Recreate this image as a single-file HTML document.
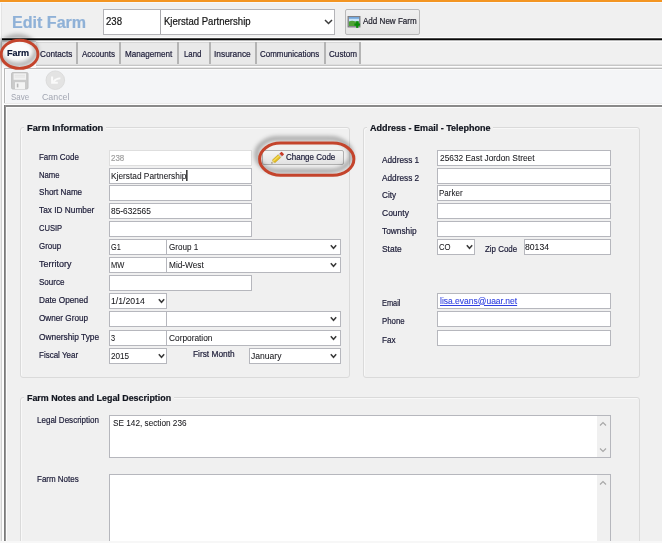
<!DOCTYPE html>
<html><head><meta charset="utf-8"><style>
html,body{margin:0;padding:0;}
body{width:662px;height:543px;overflow:hidden;position:relative;background:#f0f0f0;font-family:"Liberation Sans", sans-serif;}
.t{position:absolute;white-space:pre;transform-origin:0 0;-webkit-text-stroke:0.2px currentColor;}
.a{position:absolute;box-sizing:border-box;}
</style></head><body>
<!-- window chrome -->
<div class="a" style="left:0;top:0;width:662px;height:2px;background:#f39522"></div>
<div class="a" style="left:0;top:2px;width:662px;height:1px;background:#f7f8fa"></div>
<div class="a" style="left:0;top:3px;width:1px;height:35px;background:#fafafa"></div>
<div class="a" style="left:1px;top:3px;width:1px;height:35px;background:#e4e4e4"></div>
<div class="a" style="left:0;top:38px;width:1px;height:505px;background:#ececec"></div>
<div class="a" style="left:1px;top:38px;width:1px;height:505px;background:#d2d2d2"></div>
<div class="a" style="left:2px;top:41px;width:2px;height:502px;background:#fdfdfd"></div>

<!-- top combo -->
<div class="a" style="left:103px;top:9px;width:232px;height:26px;background:#fff;border:1px solid #b4b4b8"></div>
<div class="a" style="left:160px;top:10px;width:1px;height:24px;background:#a8a8ac"></div>
<svg class="a" style="left:324px;top:19px" width="9" height="6" viewBox="0 0 9 6"><path d="M1 1 L4.5 4.5 L8 1" fill="none" stroke="#3c3c3c" stroke-width="1.5"/></svg>

<!-- Add New Farm button -->
<div class="a" style="left:345px;top:9px;width:75px;height:26px;border:1px solid #b9b9b9;border-radius:2px;background:linear-gradient(#f0f0f0,#e4e4e4)"></div>
<svg class="a" style="left:347px;top:16px" width="16" height="15" viewBox="0 0 16 15">
 <rect x="1.2" y="0.3" width="11.6" height="10.5" fill="#c8e4f8" stroke="#7c7c80" stroke-width="1.3"/>
 <rect x="2" y="1.1" width="10" height="1.6" fill="#6a9fd8"/>
 <path d="M1.9 5.4 Q5 4.2 8 5.3 T12.1 5 V10.1 H1.9 Z" fill="#4fa236"/>
 <rect x="7.4" y="7.45" width="5.7" height="2.2" fill="#0a8c0a"/>
 <rect x="9.15" y="5.2" width="2.2" height="6.7" fill="#0a8c0a"/>
</svg>

<!-- black rule -->
<div class="a" style="left:2px;top:37px;width:660px;height:1px;background:#fdfdfd"></div>
<div class="a" style="left:2px;top:38px;width:660px;height:1px;background:#4a4a4a"></div>
<div class="a" style="left:2px;top:39px;width:660px;height:1px;background:#080808"></div>
<div class="a" style="left:2px;top:40px;width:660px;height:1px;background:#b4b4b4"></div>
<div class="a" style="left:2px;top:41px;width:660px;height:1px;background:#fafafa"></div>

<!-- tab strip -->
<div class="a" style="left:36px;top:42px;width:324px;height:23px;background:#e9e9e9;border-top:1px solid #d6d6d6"></div>
<div class="a" style="left:76px;top:42px;width:2px;height:23px;background:#b4b4b4"></div>
<div class="a" style="left:119px;top:42px;width:2px;height:23px;background:#b4b4b4"></div>
<div class="a" style="left:177px;top:42px;width:2px;height:23px;background:#b4b4b4"></div>
<div class="a" style="left:209px;top:42px;width:2px;height:23px;background:#b4b4b4"></div>
<div class="a" style="left:255px;top:42px;width:2px;height:23px;background:#b4b4b4"></div>
<div class="a" style="left:324px;top:42px;width:2px;height:23px;background:#b4b4b4"></div>
<div class="a" style="left:359px;top:42px;width:2px;height:23px;background:#b4b4b4"></div>
<div class="a" style="left:1px;top:41px;width:35px;height:27px;background:#fbfbfb;border-left:1px solid #cccccc;border-top:1px solid #d8d8d8"></div>
<div class="a" style="left:36px;top:64px;width:626px;height:1px;background:#dedede"></div>
<div class="a" style="left:36px;top:65px;width:626px;height:1px;background:#c6c6c6"></div>
<div class="a" style="left:36px;top:66px;width:626px;height:1px;background:#fefefe"></div>
<div class="a" style="left:36px;top:67px;width:626px;height:1px;background:#e6e6e6"></div>

<!-- toolbar panel -->
<div class="a" style="left:4px;top:68px;width:658px;height:37px;background:#f4f5f7;border-top:1px solid #bcbcbc;border-left:1px solid #b8b8b8"></div>
<div class="a" style="left:5px;top:69px;width:657px;height:1px;background:#fbfbfb"></div>
<div class="a" style="left:5px;top:69px;width:1px;height:35px;background:#fbfbfb"></div>
<div class="a" style="left:4px;top:103px;width:658px;height:1px;background:#ebebeb"></div>
<div class="a" style="left:4px;top:104px;width:658px;height:1px;background:#ffffff"></div>
<!-- save icon -->
<svg class="a" style="left:11px;top:72px" width="18" height="18" viewBox="0 0 18 18">
 <rect x="0.6" y="0.6" width="16.4" height="16.4" rx="1.2" fill="#cbcbcb" stroke="#c0c0c0" stroke-width="1"/>
 <rect x="2.6" y="1.4" width="12.4" height="6.4" fill="#f2f2f2"/>
 <rect x="3.6" y="2.8" width="10.4" height="0.8" fill="#dedede"/>
 <rect x="3.6" y="4.6" width="10.4" height="0.8" fill="#dedede"/>
 <rect x="4" y="10.2" width="10" height="6.8" fill="#f4f4f4"/>
 <rect x="5.8" y="11.6" width="1.6" height="3.8" fill="#b8b8b8"/>
</svg>
<!-- cancel icon -->
<svg class="a" style="left:45px;top:70px" width="21" height="21" viewBox="0 0 21 21">
 <circle cx="10.3" cy="10.2" r="9.3" fill="#e3e3e3" stroke="#d8d8d8" stroke-width="0.8"/>
 <path d="M8.4 11.8 Q11.2 8.2 15.4 8.4" fill="none" stroke="#fafafa" stroke-width="1.9"/>
 <path d="M7.1 6.6 V12.8 H12.8" fill="none" stroke="#fafafa" stroke-width="2"/>
</svg>

<!-- content frame -->
<div class="a" style="left:4px;top:105px;width:658px;height:2px;background:#8a8a8a"></div>
<div class="a" style="left:4px;top:105px;width:1px;height:436px;background:#7a7a7a"></div>
<div class="a" style="left:5px;top:105px;width:1px;height:436px;background:#959595"></div>
<div class="a" style="left:6px;top:107px;width:656px;height:1px;background:#fdfdfd"></div>
<div class="a" style="left:6px;top:107px;width:1px;height:434px;background:#fcfcfc"></div>


<!-- group frames -->
<div class="a" style="left:20px;top:127px;width:330px;height:251px;border:1px solid #dadada;border-radius:3px;box-shadow:inset 1px 1px 0 #f8f8f8"></div>
<div class="a" style="left:24px;top:122px;width:82px;height:12px;background:#f0f0f0"></div>
<div class="a" style="left:363px;top:127px;width:277px;height:251px;border:1px solid #dadada;border-radius:3px;box-shadow:inset 1px 1px 0 #f8f8f8"></div>
<div class="a" style="left:367px;top:122px;width:126px;height:12px;background:#f0f0f0"></div>
<div class="a" style="left:20px;top:397px;width:620px;height:160px;border:1px solid #dadada;border-radius:3px;box-shadow:inset 1px 1px 0 #f8f8f8"></div>
<div class="a" style="left:24px;top:391px;width:150px;height:12px;background:#f0f0f0"></div>
<div class="a" style="left:109px;top:150px;width:143px;height:16px;background:#fff;border:1px solid #dedede"></div>
<div class="a" style="left:109px;top:168px;width:143px;height:16px;background:#fff;border:1px solid #b6b7bd"></div>
<div class="a" style="left:109px;top:185px;width:143px;height:16px;background:#fff;border:1px solid #b6b7bd"></div>
<div class="a" style="left:109px;top:203px;width:143px;height:16px;background:#fff;border:1px solid #b6b7bd"></div>
<div class="a" style="left:109px;top:221px;width:143px;height:16px;background:#fff;border:1px solid #b6b7bd"></div>
<div class="a" style="left:109px;top:275px;width:143px;height:16px;background:#fff;border:1px solid #b6b7bd"></div>
<div class="a" style="left:109px;top:239px;width:232px;height:16px;background:#fff;border:1px solid #b6b7bd"></div>
<div class="a" style="left:166px;top:239px;width:1px;height:16px;background:#b6b7bd"></div>
<svg class="a" style="left:329.0px;top:244px" width="9" height="6" viewBox="0 0 9 6"><path d="M1.8 1.2 L4.5 4.3 L7.2 1.2" fill="none" stroke="#3a3a3a" stroke-width="1.5"/></svg>
<div class="a" style="left:109px;top:257px;width:232px;height:16px;background:#fff;border:1px solid #b6b7bd"></div>
<div class="a" style="left:166px;top:257px;width:1px;height:16px;background:#b6b7bd"></div>
<svg class="a" style="left:329.0px;top:262px" width="9" height="6" viewBox="0 0 9 6"><path d="M1.8 1.2 L4.5 4.3 L7.2 1.2" fill="none" stroke="#3a3a3a" stroke-width="1.5"/></svg>
<div class="a" style="left:109px;top:311px;width:232px;height:16px;background:#fff;border:1px solid #b6b7bd"></div>
<div class="a" style="left:166px;top:311px;width:1px;height:16px;background:#b6b7bd"></div>
<svg class="a" style="left:329.0px;top:316px" width="9" height="6" viewBox="0 0 9 6"><path d="M1.8 1.2 L4.5 4.3 L7.2 1.2" fill="none" stroke="#3a3a3a" stroke-width="1.5"/></svg>
<div class="a" style="left:109px;top:330px;width:232px;height:16px;background:#fff;border:1px solid #b6b7bd"></div>
<div class="a" style="left:166px;top:330px;width:1px;height:16px;background:#b6b7bd"></div>
<svg class="a" style="left:329.0px;top:335px" width="9" height="6" viewBox="0 0 9 6"><path d="M1.8 1.2 L4.5 4.3 L7.2 1.2" fill="none" stroke="#3a3a3a" stroke-width="1.5"/></svg>
<div class="a" style="left:109px;top:293px;width:58px;height:16px;background:#fff;border:1px solid #b6b7bd"></div>
<svg class="a" style="left:156.5px;top:298px" width="9" height="6" viewBox="0 0 9 6"><path d="M1.8 1.2 L4.5 4.3 L7.2 1.2" fill="none" stroke="#3a3a3a" stroke-width="1.5"/></svg>
<div class="a" style="left:109px;top:348px;width:58px;height:16px;background:#fff;border:1px solid #b6b7bd"></div>
<svg class="a" style="left:156.5px;top:353px" width="9" height="6" viewBox="0 0 9 6"><path d="M1.8 1.2 L4.5 4.3 L7.2 1.2" fill="none" stroke="#3a3a3a" stroke-width="1.5"/></svg>
<div class="a" style="left:249px;top:348px;width:92px;height:16px;background:#fff;border:1px solid #b6b7bd"></div>
<svg class="a" style="left:329.0px;top:353px" width="9" height="6" viewBox="0 0 9 6"><path d="M1.8 1.2 L4.5 4.3 L7.2 1.2" fill="none" stroke="#3a3a3a" stroke-width="1.5"/></svg>
<div class="a" style="left:437px;top:150px;width:174px;height:16px;background:#fff;border:1px solid #b6b7bd"></div>
<div class="a" style="left:437px;top:168px;width:174px;height:16px;background:#fff;border:1px solid #b6b7bd"></div>
<div class="a" style="left:437px;top:185px;width:174px;height:16px;background:#fff;border:1px solid #b6b7bd"></div>
<div class="a" style="left:437px;top:203px;width:174px;height:16px;background:#fff;border:1px solid #b6b7bd"></div>
<div class="a" style="left:437px;top:221px;width:174px;height:16px;background:#fff;border:1px solid #b6b7bd"></div>
<div class="a" style="left:437px;top:293px;width:174px;height:16px;background:#fff;border:1px solid #b6b7bd"></div>
<div class="a" style="left:437px;top:311px;width:174px;height:16px;background:#fff;border:1px solid #b6b7bd"></div>
<div class="a" style="left:437px;top:330px;width:174px;height:16px;background:#fff;border:1px solid #b6b7bd"></div>
<div class="a" style="left:437px;top:239px;width:38px;height:16px;background:#fff;border:1px solid #b6b7bd"></div>
<svg class="a" style="left:464.5px;top:244px" width="9" height="6" viewBox="0 0 9 6"><path d="M1.8 1.2 L4.5 4.3 L7.2 1.2" fill="none" stroke="#3a3a3a" stroke-width="1.5"/></svg>
<div class="a" style="left:524px;top:239px;width:87px;height:16px;background:#fff;border:1px solid #b6b7bd"></div>
<div class="a" style="left:109px;top:415px;width:502px;height:43px;background:#fff;border:1px solid #b6b7bd"></div>
<div class="a" style="left:597px;top:416px;width:13px;height:41px;background:#f0f0f0"></div>
<svg class="a" style="left:599px;top:421px" width="8" height="6" viewBox="0 0 8 6"><path d="M1 4.5 L4 1.5 L7 4.5" fill="none" stroke="#a8a8a8" stroke-width="1.2"/></svg>
<svg class="a" style="left:599px;top:447px" width="8" height="6" viewBox="0 0 8 6"><path d="M1 1.5 L4 4.5 L7 1.5" fill="none" stroke="#a8a8a8" stroke-width="1.2"/></svg>
<div class="a" style="left:109px;top:474px;width:502px;height:80px;background:#fff;border:1px solid #b6b7bd"></div>
<div class="a" style="left:597px;top:475px;width:13px;height:80px;background:#f0f0f0"></div>
<svg class="a" style="left:599px;top:480px" width="8" height="6" viewBox="0 0 8 6"><path d="M1 4.5 L4 1.5 L7 4.5" fill="none" stroke="#a8a8a8" stroke-width="1.2"/></svg>
<div class="a" style="left:186px;top:170px;width:1px;height:11px;background:#404040"></div><div class="a" style="left:187px;top:170px;width:1px;height:11px;background:#8a8a8a"></div>
<div class="a" style="left:262px;top:150px;width:82px;height:15px;border:1px solid #b0b0b0;border-radius:2px;background:linear-gradient(#f4f4f4,#e2e2e2)"></div>
<svg class="a" style="left:266px;top:148px" width="22" height="20" viewBox="0 0 22 20">
 <polygon points="5.40,15.40 8.90,14.80 6.35,11.98" fill="#e8d8a0"/>
 <polygon points="5.40,15.40 6.80,15.16 5.78,14.03" fill="#505050"/>
 <polygon points="8.90,14.80 14.83,9.43 12.28,6.61 6.35,11.98" fill="#e2bc22" stroke="#b08a10" stroke-width="0.4"/>
 <polygon points="7.75,13.53 13.68,8.16 12.79,7.17 6.86,12.54" fill="#f4dc5a"/>
 <polygon points="14.83,9.43 16.02,8.35 13.47,5.54 12.28,6.61" fill="#c8ccd4"/>
 <polygon points="16.02,8.35 18.05,6.51 17.00,4.90 15.50,3.69 13.47,5.54" fill="#c83a28"/>
</svg>
<svg class="a" style="left:0;top:0" width="662" height="543" viewBox="0 0 662 543">
 <defs><filter id="sh" x="-30%" y="-50%" width="160%" height="200%"><feGaussianBlur stdDeviation="2"/></filter></defs>
 <ellipse cx="17.6" cy="50.6" rx="18.4" ry="14.1" fill="none" stroke="#000" stroke-opacity="0.35" stroke-width="4" filter="url(#sh)"/>
 <ellipse cx="19.6" cy="54.3" rx="18.4" ry="14.1" fill="none" stroke="#c4442c" stroke-width="2.9"/>
 <rect x="256.6" y="138.6" width="94.5" height="32.4" rx="21" ry="16.2" fill="none" stroke="#000" stroke-opacity="0.35" stroke-width="4" filter="url(#sh)"/>
 <rect x="259.6" y="143" width="94.3" height="32.2" rx="21" ry="16.1" fill="none" stroke="#c4442c" stroke-width="3"/>
</svg>
<div class="a" style="left:0;top:541px;width:662px;height:2px;background:#f7f7f7;z-index:5"></div>

<span class="t" style="left:12.30px;top:13.50px;font-size:15.8px;line-height:18.15px;font-weight:bold;color:#8fb1d7;transform:scaleX(1.018);">Edit Farm</span>
<span class="t" style="left:105.60px;top:15.30px;font-size:10.5px;line-height:12.06px;font-weight:normal;color:#141414;transform:scaleX(0.913);">238</span>
<span class="t" style="left:163.80px;top:14.90px;font-size:10.5px;line-height:12.06px;font-weight:normal;color:#141414;transform:scaleX(0.910);">Kjerstad Partnership</span>
<span class="t" style="left:363.00px;top:15.80px;font-size:9.5px;line-height:10.92px;font-weight:normal;color:#1c1c28;transform:scaleX(0.848);">Add New Farm</span>
<span class="t" style="left:7.20px;top:46.93px;font-size:9.8px;line-height:11.26px;font-weight:bold;color:#0c1634;transform:scaleX(0.926);">Farm</span>
<span class="t" style="left:39.50px;top:48.98px;font-size:9.3px;line-height:10.69px;font-weight:normal;color:#1a1a36;transform:scaleX(0.880);">Contacts</span>
<span class="t" style="left:81.90px;top:48.98px;font-size:9.3px;line-height:10.69px;font-weight:normal;color:#1a1a36;transform:scaleX(0.863);">Accounts</span>
<span class="t" style="left:124.60px;top:48.98px;font-size:9.3px;line-height:10.69px;font-weight:normal;color:#1a1a36;transform:scaleX(0.873);">Management</span>
<span class="t" style="left:183.90px;top:48.98px;font-size:9.3px;line-height:10.69px;font-weight:normal;color:#1a1a36;transform:scaleX(0.846);">Land</span>
<span class="t" style="left:214.10px;top:48.98px;font-size:9.3px;line-height:10.69px;font-weight:normal;color:#1a1a36;transform:scaleX(0.899);">Insurance</span>
<span class="t" style="left:260.40px;top:48.98px;font-size:9.3px;line-height:10.69px;font-weight:normal;color:#1a1a36;transform:scaleX(0.856);">Communications</span>
<span class="t" style="left:328.70px;top:48.98px;font-size:9.3px;line-height:10.69px;font-weight:normal;color:#1a1a36;transform:scaleX(0.874);">Custom</span>
<span class="t" style="left:10.80px;top:90.63px;font-size:9.8px;line-height:11.26px;font-weight:normal;color:#a2a6b2;transform:scaleX(0.810);-webkit-text-stroke:0;">Save</span>
<span class="t" style="left:41.60px;top:90.63px;font-size:9.8px;line-height:11.26px;font-weight:normal;color:#a2a6b2;transform:scaleX(0.898);-webkit-text-stroke:0;">Cancel</span>
<span class="t" style="left:26.70px;top:123.05px;font-size:9px;line-height:10.34px;font-weight:bold;color:#10141e;transform:scaleX(1.030);">Farm Information</span>
<span class="t" style="left:369.70px;top:122.76px;font-size:9px;line-height:10.34px;font-weight:bold;color:#10141e;transform:scaleX(1.002);">Address - Email - Telephone</span>
<span class="t" style="left:26.50px;top:393.06px;font-size:9px;line-height:10.34px;font-weight:bold;color:#10141e;transform:scaleX(0.987);">Farm Notes and Legal Description</span>
<span class="t" style="left:38.70px;top:151.78px;font-size:9.3px;line-height:10.69px;font-weight:normal;color:#1a1a36;transform:scaleX(0.856);">Farm Code</span>
<span class="t" style="left:38.70px;top:169.78px;font-size:9.3px;line-height:10.69px;font-weight:normal;color:#1a1a36;transform:scaleX(0.830);">Name</span>
<span class="t" style="left:38.70px;top:186.78px;font-size:9.3px;line-height:10.69px;font-weight:normal;color:#1a1a36;transform:scaleX(0.869);">Short Name</span>
<span class="t" style="left:38.70px;top:204.78px;font-size:9.3px;line-height:10.69px;font-weight:normal;color:#1a1a36;transform:scaleX(0.892);">Tax ID Number</span>
<span class="t" style="left:38.70px;top:222.78px;font-size:9.3px;line-height:10.69px;font-weight:normal;color:#1a1a36;transform:scaleX(0.816);">CUSIP</span>
<span class="t" style="left:38.70px;top:240.78px;font-size:9.3px;line-height:10.69px;font-weight:normal;color:#1a1a36;transform:scaleX(0.855);">Group</span>
<span class="t" style="left:38.70px;top:258.78px;font-size:9.3px;line-height:10.69px;font-weight:normal;color:#1a1a36;transform:scaleX(0.968);">Territory</span>
<span class="t" style="left:38.70px;top:276.78px;font-size:9.3px;line-height:10.69px;font-weight:normal;color:#1a1a36;transform:scaleX(0.865);">Source</span>
<span class="t" style="left:38.70px;top:294.78px;font-size:9.3px;line-height:10.69px;font-weight:normal;color:#1a1a36;transform:scaleX(0.888);">Date Opened</span>
<span class="t" style="left:38.70px;top:312.78px;font-size:9.3px;line-height:10.69px;font-weight:normal;color:#1a1a36;transform:scaleX(0.880);">Owner Group</span>
<span class="t" style="left:38.70px;top:331.78px;font-size:9.3px;line-height:10.69px;font-weight:normal;color:#1a1a36;transform:scaleX(0.897);">Ownership Type</span>
<span class="t" style="left:38.70px;top:349.78px;font-size:9.3px;line-height:10.69px;font-weight:normal;color:#1a1a36;transform:scaleX(0.860);">Fiscal Year</span>
<span class="t" style="left:192.90px;top:349.08px;font-size:9.3px;line-height:10.69px;font-weight:normal;color:#1a1a36;transform:scaleX(0.895);">First Month</span>
<span class="t" style="left:381.50px;top:154.58px;font-size:9.3px;line-height:10.69px;font-weight:normal;color:#1a1a36;transform:scaleX(0.889);">Address 1</span>
<span class="t" style="left:381.50px;top:172.58px;font-size:9.3px;line-height:10.69px;font-weight:normal;color:#1a1a36;transform:scaleX(0.889);">Address 2</span>
<span class="t" style="left:381.50px;top:189.58px;font-size:9.3px;line-height:10.69px;font-weight:normal;color:#1a1a36;transform:scaleX(0.880);">City</span>
<span class="t" style="left:381.50px;top:207.58px;font-size:9.3px;line-height:10.69px;font-weight:normal;color:#1a1a36;transform:scaleX(0.913);">County</span>
<span class="t" style="left:381.50px;top:225.58px;font-size:9.3px;line-height:10.69px;font-weight:normal;color:#1a1a36;transform:scaleX(0.893);">Township</span>
<span class="t" style="left:381.50px;top:243.58px;font-size:9.3px;line-height:10.69px;font-weight:normal;color:#1a1a36;transform:scaleX(0.907);">State</span>
<span class="t" style="left:381.50px;top:297.58px;font-size:9.3px;line-height:10.69px;font-weight:normal;color:#1a1a36;transform:scaleX(0.796);">Email</span>
<span class="t" style="left:381.50px;top:315.58px;font-size:9.3px;line-height:10.69px;font-weight:normal;color:#1a1a36;transform:scaleX(0.840);">Phone</span>
<span class="t" style="left:381.50px;top:334.58px;font-size:9.3px;line-height:10.69px;font-weight:normal;color:#1a1a36;transform:scaleX(0.877);">Fax</span>
<span class="t" style="left:484.70px;top:243.58px;font-size:9.3px;line-height:10.69px;font-weight:normal;color:#1a1a36;transform:scaleX(0.851);">Zip Code</span>
<span class="t" style="left:110.80px;top:152.58px;font-size:9.3px;line-height:10.69px;font-weight:normal;color:#a0a0a0;transform:scaleX(0.857);">238</span>
<span class="t" style="left:110.80px;top:170.58px;font-size:9.3px;line-height:10.69px;font-weight:normal;color:#141418;transform:scaleX(0.895);-webkit-text-stroke:0.05px currentColor;">Kjerstad Partnership</span>
<span class="t" style="left:110.80px;top:205.58px;font-size:9.3px;line-height:10.69px;font-weight:normal;color:#141418;transform:scaleX(0.897);-webkit-text-stroke:0.05px currentColor;">85-632565</span>
<span class="t" style="left:110.80px;top:241.58px;font-size:9.3px;line-height:10.69px;font-weight:normal;color:#141418;transform:scaleX(0.782);-webkit-text-stroke:0.05px currentColor;">G1</span>
<span class="t" style="left:168.60px;top:241.58px;font-size:9.3px;line-height:10.69px;font-weight:normal;color:#141418;transform:scaleX(0.872);-webkit-text-stroke:0.05px currentColor;">Group 1</span>
<span class="t" style="left:110.80px;top:259.58px;font-size:9.3px;line-height:10.69px;font-weight:normal;color:#141418;transform:scaleX(0.805);-webkit-text-stroke:0.05px currentColor;">MW</span>
<span class="t" style="left:168.60px;top:259.58px;font-size:9.3px;line-height:10.69px;font-weight:normal;color:#141418;transform:scaleX(0.890);-webkit-text-stroke:0.05px currentColor;">Mid-West</span>
<span class="t" style="left:110.80px;top:295.58px;font-size:9.3px;line-height:10.69px;font-weight:normal;color:#141418;transform:scaleX(0.934);-webkit-text-stroke:0.05px currentColor;">1/1/2014</span>
<span class="t" style="left:110.80px;top:332.58px;font-size:9.3px;line-height:10.69px;font-weight:normal;color:#141418;transform:scaleX(0.793);-webkit-text-stroke:0.05px currentColor;">3</span>
<span class="t" style="left:168.80px;top:332.58px;font-size:9.3px;line-height:10.69px;font-weight:normal;color:#141418;transform:scaleX(0.895);-webkit-text-stroke:0.05px currentColor;">Corporation</span>
<span class="t" style="left:110.80px;top:350.58px;font-size:9.3px;line-height:10.69px;font-weight:normal;color:#141418;transform:scaleX(0.875);-webkit-text-stroke:0.05px currentColor;">2015</span>
<span class="t" style="left:251.40px;top:350.58px;font-size:9.3px;line-height:10.69px;font-weight:normal;color:#141418;transform:scaleX(0.922);-webkit-text-stroke:0.05px currentColor;">January</span>
<span class="t" style="left:439.70px;top:152.58px;font-size:9.3px;line-height:10.69px;font-weight:normal;color:#141418;transform:scaleX(0.897);-webkit-text-stroke:0.05px currentColor;">25632 East Jordon Street</span>
<span class="t" style="left:439.20px;top:187.58px;font-size:9.3px;line-height:10.69px;font-weight:normal;color:#141418;transform:scaleX(0.862);-webkit-text-stroke:0.05px currentColor;">Parker</span>
<span class="t" style="left:439.20px;top:241.58px;font-size:9.3px;line-height:10.69px;font-weight:normal;color:#141418;transform:scaleX(0.831);-webkit-text-stroke:0.05px currentColor;">CO</span>
<span class="t" style="left:525.40px;top:241.58px;font-size:9.3px;line-height:10.69px;font-weight:normal;color:#141418;transform:scaleX(0.928);-webkit-text-stroke:0.05px currentColor;">80134</span>
<span class="t" style="left:439.70px;top:295.58px;font-size:9.3px;line-height:10.69px;font-weight:normal;color:#3040e0;transform:scaleX(0.914);text-decoration:underline;-webkit-text-stroke:0.1px currentColor;">lisa.evans@uaar.net</span>
<span class="t" style="left:286.10px;top:152.38px;font-size:9.3px;line-height:10.69px;font-weight:normal;color:#1a1a36;transform:scaleX(0.859);">Change Code</span>
<span class="t" style="left:36.70px;top:414.88px;font-size:9.3px;line-height:10.69px;font-weight:normal;color:#1a1a36;transform:scaleX(0.863);">Legal Description</span>
<span class="t" style="left:112.90px;top:418.38px;font-size:9.3px;line-height:10.69px;font-weight:normal;color:#141418;transform:scaleX(0.884);-webkit-text-stroke:0.05px currentColor;">SE 142, section 236</span>
<span class="t" style="left:36.90px;top:473.78px;font-size:9.3px;line-height:10.69px;font-weight:normal;color:#1a1a36;transform:scaleX(0.859);">Farm Notes</span>
</body></html>
